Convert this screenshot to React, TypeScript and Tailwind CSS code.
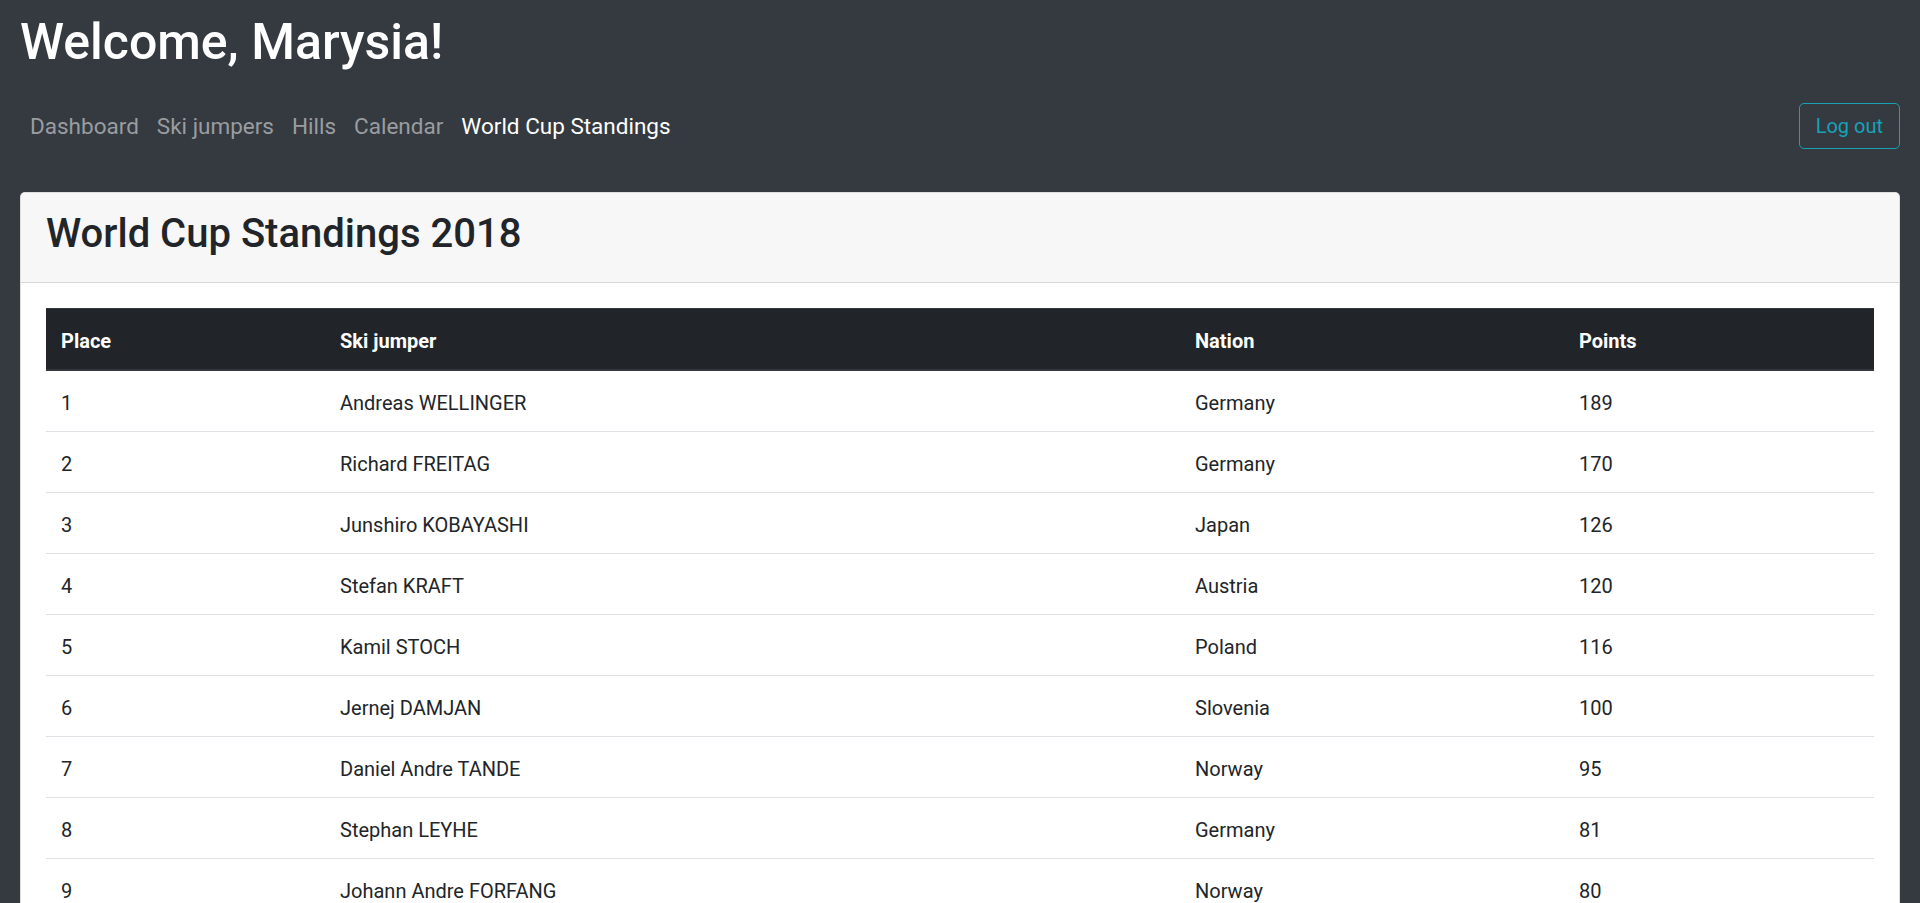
import React from "react";

const rows = [
  ["1", "Andreas WELLINGER", "Germany", "189"],
  ["2", "Richard FREITAG", "Germany", "170"],
  ["3", "Junshiro KOBAYASHI", "Japan", "126"],
  ["4", "Stefan KRAFT", "Austria", "120"],
  ["5", "Kamil STOCH", "Poland", "116"],
  ["6", "Jernej DAMJAN", "Slovenia", "100"],
  ["7", "Daniel Andre TANDE", "Norway", "95"],
  ["8", "Stephan LEYHE", "Germany", "81"],
  ["9", "Johann Andre FORFANG", "Norway", "80"],
  ["10", "Manuel FETTNER", "Austria", "75"],
  ["11", "Anze LANISEK", "Slovenia", "70"],
];

const navItems = ["Dashboard", "Ski jumpers", "Hills", "Calendar", "World Cup Standings"];

export default function App() {
  return (
    <div
      className="min-h-screen bg-[#343a40] px-[20px] pb-[20px]"
      style={{ fontFamily: '"Segoe UI", Roboto, "Liberation Sans", sans-serif' }}
    >
      <h1 className="pt-[12px] text-[50px] leading-[60px] font-medium text-white">Welcome, Marysia!</h1>
      <div className="mt-[29px] flex items-center justify-between">
        <nav className="ml-[1px] flex">
          {navItems.map((item, i) => (
            <a
              key={item}
              className={
                i === navItems.length - 1
                  ? "px-[9px] py-[10px] text-[22.5px] leading-[30px] text-white"
                  : "px-[9px] py-[10px] text-[22.5px] leading-[30px] text-[#9a9da0]"
              }
            >
              {item}
            </a>
          ))}
        </nav>
        <button className="rounded-[5px] border border-[#17a2b8] px-[16px] py-[7px] text-[20px] leading-[30px] text-[#17a2b8]">
          Log out
        </button>
      </div>
      <div className="mt-[41px] rounded-[5px] border border-[#00000020] bg-white">
        <div className="rounded-t-[5px] border-b border-[#00000020] bg-[#f7f7f7] px-[25px] pt-[17px] pb-[24px]">
          <h2 className="text-[40px] leading-[48px] font-medium text-[#212529]">World Cup Standings 2018</h2>
        </div>
        <div className="p-[25px]">
          <table className="w-full table-fixed border-collapse text-[20px] leading-[30px] text-[#212529]">
            <colgroup>
              <col className="w-[279px]" />
              <col className="w-[855px]" />
              <col className="w-[384px]" />
              <col />
            </colgroup>
            <thead>
              <tr className="bg-[#212529] text-white">
                <th className="border-t border-b-2 border-[#32383e] px-[15px] pt-[17px] pb-[13px] text-left font-bold">Place</th>
                <th className="border-t border-b-2 border-[#32383e] px-[15px] pt-[17px] pb-[13px] text-left font-bold">Ski jumper</th>
                <th className="border-t border-b-2 border-[#32383e] px-[15px] pt-[17px] pb-[13px] text-left font-bold">Nation</th>
                <th className="border-t border-b-2 border-[#32383e] px-[15px] pt-[17px] pb-[13px] text-left font-bold">Points</th>
              </tr>
            </thead>
            <tbody>
              {rows.map((r, idx) => (
                <tr key={r[0]}>
                  {r.map((c, j) => (
                    <td
                      key={j}
                      className={
                        idx === 0
                          ? "px-[15px] pt-[17px] pb-[13px]"
                          : "border-t border-[#dee2e6] px-[15px] pt-[17px] pb-[13px]"
                      }
                    >
                      {c}
                    </td>
                  ))}
                </tr>
              ))}
            </tbody>
          </table>
        </div>
      </div>
    </div>
  );
}
